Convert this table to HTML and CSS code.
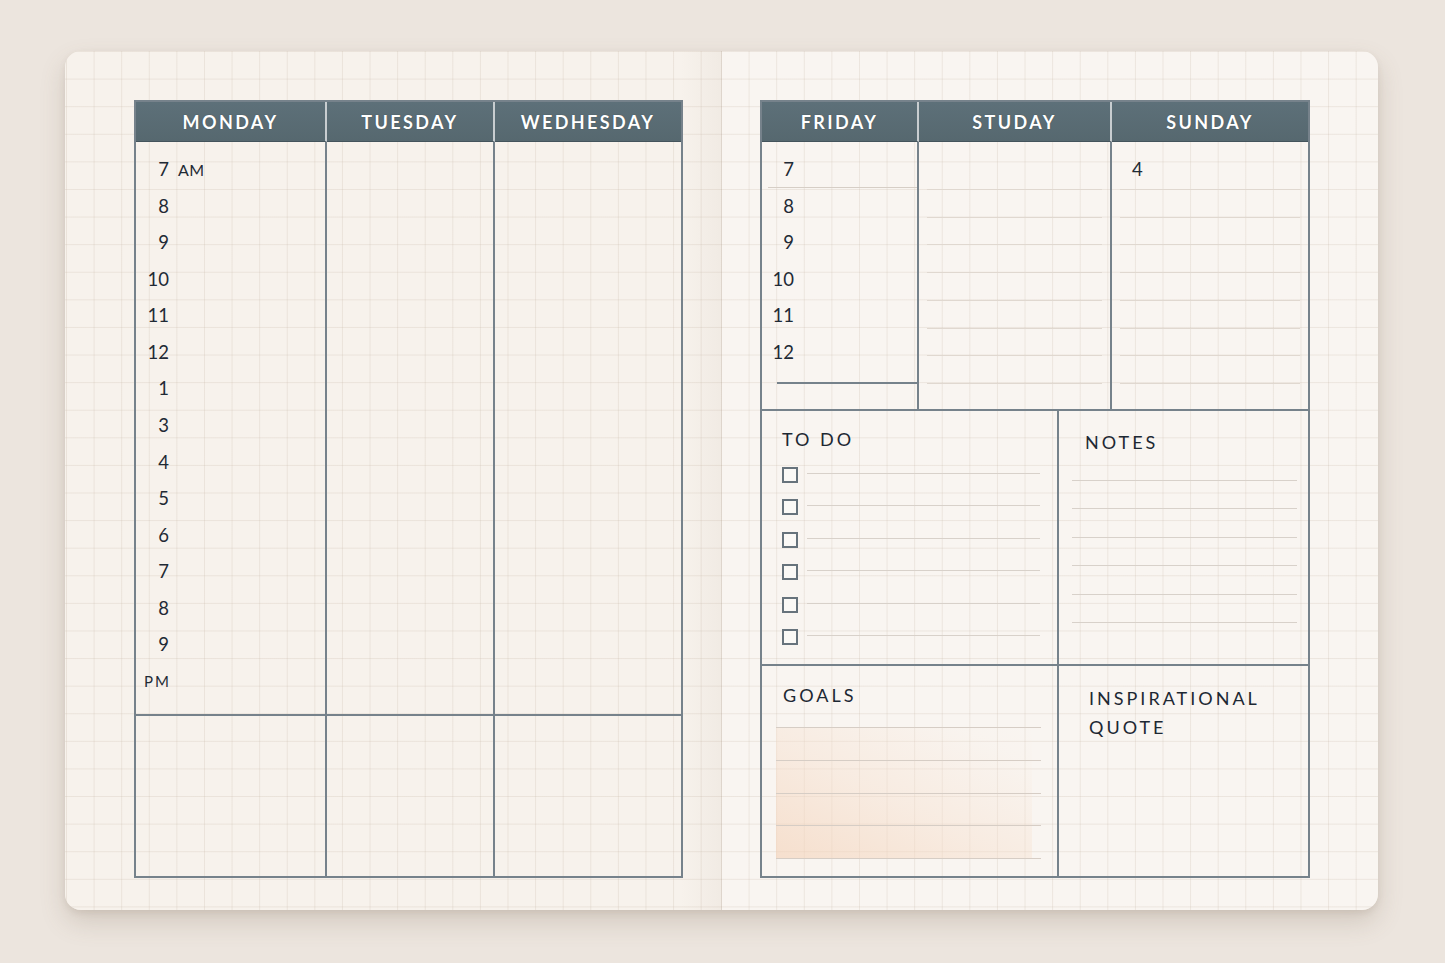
FILE: index.html
```html
<!DOCTYPE html>
<html lang="en">
<head>
<meta charset="utf-8">
<title>Weekly Planner</title>
<link rel="stylesheet" href="styles.css">
</head>
<body>
<div class="desk">
  <div class="book">
    <section class="page page-left">
      <div class="week week-left">
        <div class="hd">MONDAY</div>
        <div class="hd">TUESDAY</div>
        <div class="hd hd-last">WEDHESDAY</div>

        <div class="cell body col-sep">
          <div class="times">
            <div class="t"><span class="n">7</span><span class="ampm">AM</span></div>
            <div class="t"><span class="n">8</span></div>
            <div class="t"><span class="n">9</span></div>
            <div class="t"><span class="n">10</span></div>
            <div class="t"><span class="n">11</span></div>
            <div class="t"><span class="n">12</span></div>
            <div class="t"><span class="n">1</span></div>
            <div class="t"><span class="n">3</span></div>
            <div class="t"><span class="n">4</span></div>
            <div class="t"><span class="n">5</span></div>
            <div class="t"><span class="n">6</span></div>
            <div class="t"><span class="n">7</span></div>
            <div class="t"><span class="n">8</span></div>
            <div class="t"><span class="n">9</span></div>
            <div class="t"><span class="n pm">PM</span></div>
          </div>
        </div>
        <div class="cell body col-sep"></div>
        <div class="cell body"></div>

        <div class="cell col-sep"></div>
        <div class="cell col-sep"></div>
        <div class="cell"></div>
      </div>
    </section>

    <section class="page page-right">
      <div class="week week-right">
        <div class="days">
          <div class="hd">FRIDAY</div>
          <div class="hd">STUDAY</div>
          <div class="hd hd-last">SUNDAY</div>

          <div class="cell body col-sep">
            <div class="fri-times">
              <div class="ft ft-first"><span class="n">7</span></div>
              <div class="ft"><span class="n">8</span></div>
              <div class="ft"><span class="n">9</span></div>
              <div class="ft"><span class="n">10</span></div>
              <div class="ft"><span class="n">11</span></div>
              <div class="ft"><span class="n">12</span></div>
            </div>
            <div class="fri-end"></div>
          </div>
          <div class="cell body col-sep">
            <div class="rules rules-sat"></div>
          </div>
          <div class="cell body">
            <div class="sun-num">4</div>
            <div class="rules rules-sun"></div>
          </div>
        </div>

        <div class="panels">
          <div class="panel todo">
            <h2 class="ptitle">TO DO</h2>
            <ul class="checks">
              <li class="check"><span class="box"></span><span class="wline"></span></li>
              <li class="check"><span class="box"></span><span class="wline"></span></li>
              <li class="check"><span class="box"></span><span class="wline"></span></li>
              <li class="check"><span class="box"></span><span class="wline"></span></li>
              <li class="check"><span class="box"></span><span class="wline"></span></li>
              <li class="check"><span class="box"></span><span class="wline"></span></li>
            </ul>
          </div>
          <div class="panel notes">
            <h2 class="ptitle">NOTES</h2>
            <div class="note-lines">
              <div class="nl"></div><div class="nl"></div><div class="nl"></div>
              <div class="nl"></div><div class="nl"></div><div class="nl"></div>
            </div>
          </div>
          <div class="panel goals">
            <h2 class="ptitle">GOALS</h2>
            <div class="goal-box">
              <div class="gl"></div><div class="gl"></div><div class="gl"></div><div class="gl"></div>
            </div>
          </div>
          <div class="panel quote">
            <h2 class="ptitle qtitle">INSPIRATIONAL<br>QUOTE</h2>
          </div>
        </div>
      </div>
    </section>
  </div>
</div>
</body>
</html>
```

FILE: styles.css
```css
* { box-sizing: border-box; margin: 0; padding: 0; }
html, body { height: 100%; }
body {
  background: #ece5de;
  font-family: Lato, "Open Sans", "Liberation Sans", sans-serif;
  color: #1f2a35;
}
ul { list-style: none; }
h2 { font-weight: 400; }

.desk {
  padding: 51px 0 0 65px;
}

.book {
  display: flex;
  width: 1313px;
  height: 859px;
  border-radius: 16px;
  box-shadow: 0 12px 26px rgba(110, 88, 70, 0.20), 0 3px 6px rgba(110, 88, 70, 0.10);
}

.page {
  height: 100%;
  background-color: #f8f4ef;
  background-image:
    linear-gradient(to right, rgba(200, 184, 168, 0.26) 1px, transparent 1px),
    linear-gradient(to bottom, rgba(200, 184, 168, 0.26) 1px, transparent 1px);
  background-size: 27.6px 27.6px;
}

.page-left {
  width: 656px;
  border-radius: 16px 0 0 16px;
  padding: 49px 0 0 69px;
  background-color: #f7f2ec;
  background-image:
    linear-gradient(to left, rgba(160, 138, 118, 0.07), rgba(160, 138, 118, 0) 40px),
    linear-gradient(to right, rgba(200, 184, 168, 0.26) 1px, transparent 1px),
    linear-gradient(to bottom, rgba(200, 184, 168, 0.26) 1px, transparent 1px);
  background-size: 100% 100%, 27.6px 27.6px, 27.6px 27.6px;
  background-position: 0 0, 1px 0, 0 0;
}

.page-right {
  width: 657px;
  border-radius: 0 16px 16px 0;
  padding: 49px 0 0 39px;
  background-color: #f9f5f1;
  box-shadow: inset 1px 0 0 rgba(150, 130, 112, 0.16);
}

/* ---- shared table pieces ---- */
.week {
  border: 2px solid #76828b;
}

.hd {
  background: linear-gradient(180deg, #5d7079 0%, #56686f 100%);
  color: #ffffff;
  font-weight: 700;
  font-size: 18px;
  letter-spacing: 2.4px;
  display: flex;
  align-items: center;
  justify-content: center;
  border-right: 2px solid #c8cdd0;
  border-bottom: 1px solid #44545c;
  text-shadow: 0 0 1px rgba(30, 40, 48, 0.6);
}
.hd-last { border-right: none; }

.cell.col-sep { border-right: 2px solid #76828b; }
.cell.body { border-bottom: 2px solid #76828b; }

/* ---- left ---- */
.week-left {
  display: grid;
  width: 549px;
  height: 778px;
  grid-template-columns: 191px 168px 186px;
  grid-template-rows: 40px 574px 160px;
}

.times {
  padding-top: 9px;
}
.t {
  height: 36.57px;
  line-height: 36.57px;
  display: flex;
  align-items: baseline;
  font-size: 18.5px;
}
.t .n {
  width: 33px;
  text-align: right;
}
.t .ampm {
  margin-left: 9px;
  font-size: 16px;
  letter-spacing: 0.4px;
}
.t .pm {
  width: 35px;
  font-size: 15px;
  letter-spacing: 2px;
}

/* ---- right ---- */
.week-right {
  width: 550px;
  height: 778px;
  display: flex;
  flex-direction: column;
}

.days {
  display: grid;
  grid-template-columns: 157px 193px 196px;
  grid-template-rows: 40px 269px;
}

.fri-times {
  padding-top: 9px;
}
.ft {
  height: 36.57px;
  line-height: 36.57px;
  font-size: 18.5px;
  margin-left: 6px;
}
.ft .n {
  display: inline-block;
  width: 26px;
  text-align: right;
}
.ft-first {
  border-bottom: 1px solid #d6cec6;
}
.fri-end {
  margin: 12px 0 0 15px;
  height: 2px;
  background: #76828b;
}

.rules {
  height: 196px;
  background-image: repeating-linear-gradient(to bottom, #e0d8d0 0, #e0d8d0 1px, transparent 1px, transparent 27.7px);
}
.rules-sat {
  margin: 47px 8px 0 8px;
}
.sun-num {
  padding-top: 9px;
  padding-left: 20px;
  height: 46.6px;
  line-height: 36.57px;
  font-size: 18.5px;
}
.rules-sun {
  margin: 0 8px 0 8px;
}

.panels {
  display: grid;
  grid-template-columns: 297px 249px;
  grid-template-rows: 255px 210px;
}
.panel.todo, .panel.notes { border-bottom: 2px solid #76828b; }
.panel.todo, .panel.goals { border-right: 2px solid #76828b; }

.ptitle {
  font-size: 18px;
  line-height: 22px;
  letter-spacing: 3px;
  color: #1d2833;
}

.todo {
  padding: 17px 17px 0 20px;
}
.checks {
  margin-top: 17px;
}
.check {
  display: flex;
  align-items: flex-start;
  height: 32.4px;
}
.box {
  width: 16px;
  height: 16px;
  border: 2px solid #67737c;
  background: #fbf9f6;
  flex: none;
}
.wline {
  flex: 1;
  height: 1px;
  margin: 6px 0 0 9px;
  background: #d8d1ca;
}

.notes {
  padding: 20px 11px 0 13px;
}
.notes .ptitle {
  padding-left: 13px;
}
.note-lines {
  margin-top: 27px;
}
.nl {
  height: 28.4px;
  border-top: 1px solid #d8d1ca;
}

.goals {
  padding: 18px 16px 0 14px;
}
.goals .ptitle {
  padding-left: 7px;
}
.goal-box {
  margin-top: 21px;
  height: 132px;
  border-bottom: 1px solid #d6cdc5;
  background-image: linear-gradient(to top right, rgba(244, 210, 184, 0.62) 0%, rgba(246, 222, 203, 0.42) 45%, rgba(248, 234, 222, 0.12) 85%, rgba(248, 238, 230, 0) 100%);
  background-size: 256px 100%;
  background-repeat: no-repeat;
}
.gl {
  height: 32.75px;
  border-top: 1px solid #d6cdc5;
}

.quote {
  padding: 18px 10px 0 30px;
}
.qtitle {
  line-height: 29px;
}
```
